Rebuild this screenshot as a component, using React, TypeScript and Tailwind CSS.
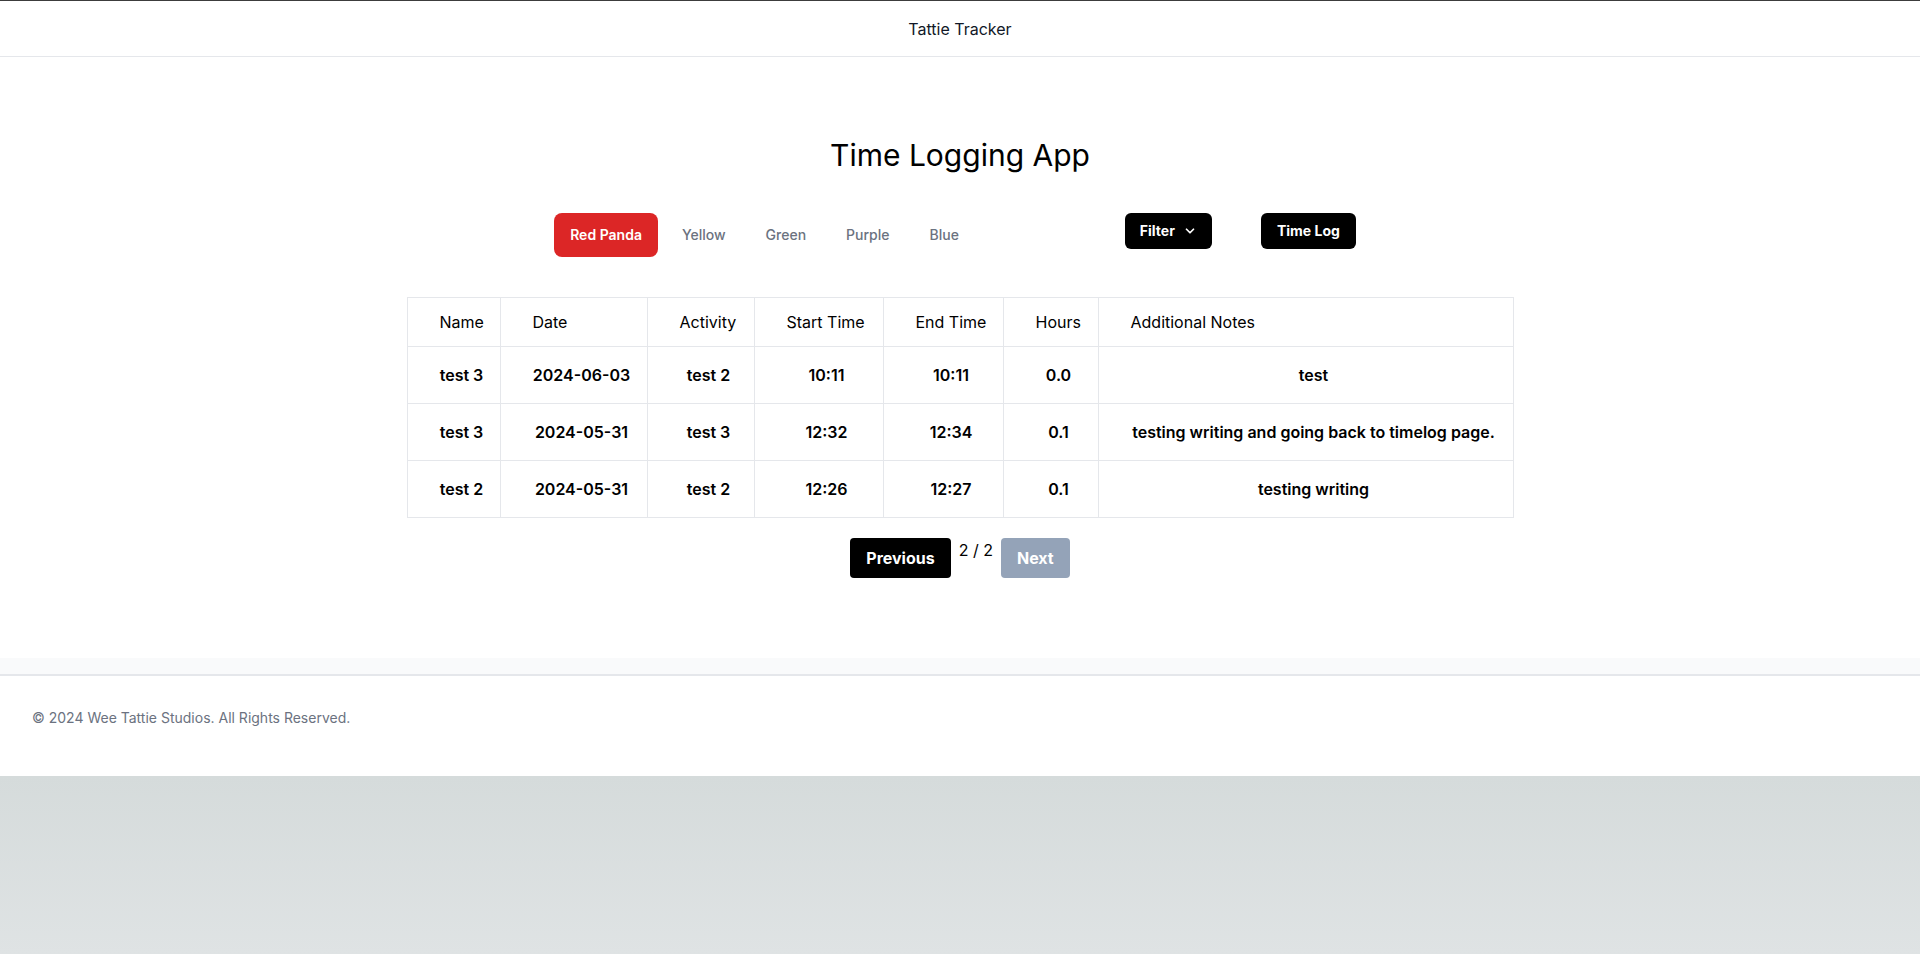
import { ChevronDown } from "lucide-react";

const tabs = ["Red Panda", "Yellow", "Green", "Purple", "Blue"];

const rows = [
  { name: "test 3", date: "2024-06-03", activity: "test 2", start: "10:11", end: "10:11", hours: "0.0", notes: "test" },
  { name: "test 3", date: "2024-05-31", activity: "test 3", start: "12:32", end: "12:34", hours: "0.1", notes: "testing writing and going back to timelog page." },
  { name: "test 2", date: "2024-05-31", activity: "test 2", start: "12:26", end: "12:27", hours: "0.1", notes: "testing writing" },
];

export default function App() {
  return (
    <div className="flex min-h-screen flex-col font-['Inter',sans-serif] text-black">
      {/* Header */}
      <header className="flex h-[57px] items-center justify-center border-t border-b border-t-[#3c3c3c] border-b-[#e5e7eb] bg-white shadow-sm">
        <span className="text-base text-[#111827]">Tattie Tracker</span>
      </header>

      <div className="bg-[#f9fafb] pb-4">
        <main className="flex flex-col items-center bg-white pt-20 pb-20">
          <h1 className="text-3xl font-normal">Time Logging App</h1>

          {/* Tabs + actions */}
          <div className="mt-10 flex items-start pr-[10px]">
            <div className="flex gap-2">
              {tabs.map((tab, i) => (
                <button
                  key={tab}
                  className={
                    i === 0
                      ? "rounded-lg bg-[#dc2626] px-4 py-3 text-sm font-semibold text-white"
                      : "rounded-lg px-4 py-3 text-sm font-medium text-[#6b7280]"
                  }
                >
                  {tab}
                </button>
              ))}
            </div>
            <button className="ml-[150px] flex items-center gap-2 rounded-md bg-black px-[15px] py-2 text-sm font-bold text-white">
              Filter
              <ChevronDown size={14} strokeWidth={3} />
            </button>
            <button className="ml-[49px] rounded-md bg-black px-4 py-2 text-sm font-bold text-white">
              Time Log
            </button>
          </div>

          {/* Table */}
          <table className="mt-10 w-[1107px] table-fixed border-collapse border border-[#e5e7eb]">
            <thead>
              <tr>
                <th className="w-[93px] border border-[#e5e7eb] py-3 pl-8 text-left font-normal">Name</th>
                <th className="w-[147px] border border-[#e5e7eb] py-3 pl-8 text-left font-normal">Date</th>
                <th className="w-[107px] border border-[#e5e7eb] py-3 pl-8 text-left font-normal">Activity</th>
                <th className="w-[129px] border border-[#e5e7eb] py-3 pl-8 text-left font-normal">Start Time</th>
                <th className="w-[120px] border border-[#e5e7eb] py-3 pl-8 text-left font-normal">End Time</th>
                <th className="w-[95px] border border-[#e5e7eb] py-3 pl-8 text-left font-normal">Hours</th>
                <th className="border border-[#e5e7eb] py-3 pl-8 text-left font-normal">Additional Notes</th>
              </tr>
            </thead>
            <tbody>
              {rows.map((row, index) => (
                <tr key={index}>
                  {[row.name, row.date, row.activity, row.start, row.end, row.hours, row.notes].map((cell, j) => (
                    <td
                      key={j}
                      className="whitespace-nowrap border border-[#e5e7eb] py-4 pl-8 pr-4 text-center font-semibold"
                    >
                      {cell}
                    </td>
                  ))}
                </tr>
              ))}
            </tbody>
          </table>

          {/* Pagination */}
          <div className="mt-5 flex justify-center">
            <button className="rounded bg-black px-4 py-2 font-bold text-white">Previous</button>
            <span className="mx-2">2 / 2</span>
            <button className="rounded bg-[#94a3b8] px-4 py-2 font-bold text-white" disabled>
              Next
            </button>
          </div>
        </main>
      </div>

      {/* Footer */}
      <footer className="border-t-2 border-[#e5e7eb] bg-white px-8 pt-8 pb-12">
        <p className="text-sm text-[#6b7280]">© 2024 Wee Tattie Studios. All Rights Reserved.</p>
      </footer>

      <div className="flex-1 bg-gradient-to-b from-[#d5dbdb] to-[#dfe3e4]" />
    </div>
  );
}
